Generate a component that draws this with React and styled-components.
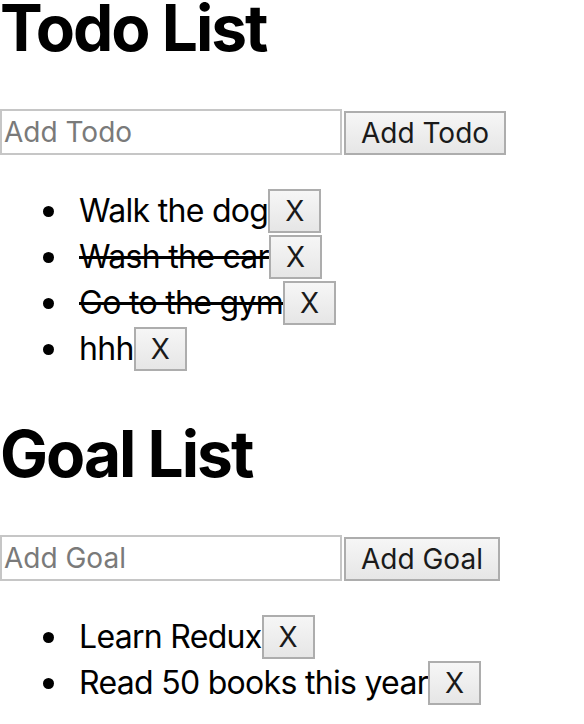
import React from 'react'
import styled, { createGlobalStyle } from 'styled-components'

const GlobalStyle = createGlobalStyle`
  body {
    margin: 0;
    background: #fff;
    color: #000;
    font-family: Inter, 'Liberation Sans', sans-serif;
  }
`

const Section = styled.section`
  display: flex;
  flex-direction: column;
  & + & {
    margin-top: 54px;
  }
`

const Title = styled.h1`
  font-size: 64px;
  font-weight: 700;
  line-height: 55px;
  margin: 0;
  letter-spacing: -2px;
`

const Form = styled.form`
  display: flex;
  align-items: flex-end;
  gap: 2px;
  margin-top: 54px;
`

const Input = styled.input`
  box-sizing: border-box;
  width: 342px;
  height: 46px;
  border: 2px solid #c6c6c6;
  padding: 0 2px;
  font-family: Inter, 'Liberation Sans', sans-serif;
  font-size: 28px;
  color: #000;
  outline: none;
  &::placeholder {
    color: #7a7a7a;
  }
`

const Button = styled.button`
  box-sizing: border-box;
  height: 44px;
  padding: 0 15px;
  border: 2px solid #adadad;
  border-radius: 0;
  background: linear-gradient(#f6f6f6, #e6e6e6);
  font-family: Inter, 'Liberation Sans', sans-serif;
  font-size: 28px;
  color: #1a1a1a;
  line-height: 1;
`

const List = styled.ul`
  list-style: none;
  margin: 33px 0 0;
  padding: 0;
`

const Item = styled.li`
  display: flex;
  align-items: center;
  height: 46px;
  &::before {
    content: '';
    width: 11px;
    height: 11px;
    border-radius: 50%;
    background: #000;
    margin: 0 25px 0 43px;
  }
`

const ItemText = styled.span`
  font-size: 32px;
  line-height: 1;
  letter-spacing: -0.7px;
  text-decoration: ${p => (p.$done ? 'line-through' : 'none')};
`

const todos = [
  { name: 'Walk the dog', done: false },
  { name: 'Wash the car', done: true },
  { name: 'Go to the gym', done: true },
  { name: 'hhh', done: false },
]

const goals = [
  { name: 'Learn Redux' },
  { name: 'Read 50 books this year' },
]

function ListBlock({ title, placeholder, items }) {
  return (
    <Section>
      <Title>{title}</Title>
      <Form onSubmit={e => e.preventDefault()}>
        <Input type="text" placeholder={placeholder} />
        <Button type="submit">{placeholder}</Button>
      </Form>
      <List>
        {items.map(item => (
          <Item key={item.name}>
            <ItemText $done={item.done}>{item.name}</ItemText>
            <Button type="button">X</Button>
          </Item>
        ))}
      </List>
    </Section>
  )
}

function App() {
  return (
    <div>
      <GlobalStyle />
      <ListBlock title="Todo List" placeholder="Add Todo" items={todos} />
      <ListBlock title="Goal List" placeholder="Add Goal" items={goals} />
    </div>
  )
}

export default App
